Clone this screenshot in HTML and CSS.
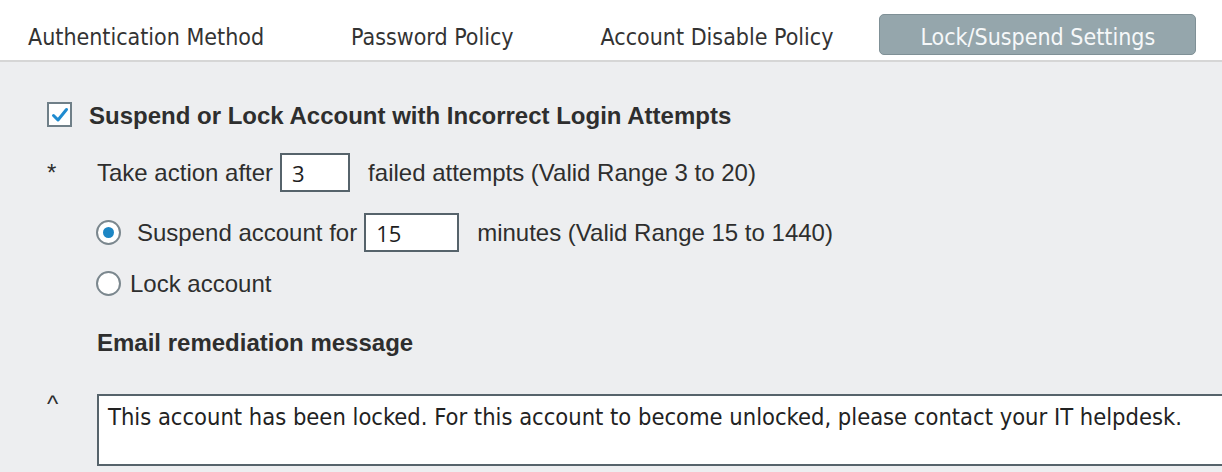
FILE: index.html
```html
<!DOCTYPE html>
<html lang="en">
<head>
  <meta charset="UTF-8">
  <title>Lock/Suspend Settings</title>
  <link rel="stylesheet" href="styles.css">
</head>
<body>
  <div class="tabs">
    <div class="tab">Authentication Method</div>
    <div class="tab">Password Policy</div>
    <div class="tab">Account Disable Policy</div>
    <div class="tab active">Lock/Suspend Settings</div>
  </div>

  <div class="panel">
    <div class="check-row">
      <span class="checkbox">
        <svg width="18" height="16" viewBox="0 0 18 16">
          <path d="M2.5 8.5 L7 13 L15.5 2.5" fill="none" stroke="#1f8bd0" stroke-width="3" stroke-linecap="round" stroke-linejoin="round"/>
        </svg>
      </span>
      <span class="title">Suspend or Lock Account with Incorrect Login Attempts</span>
    </div>

    <div class="row attempts">
      <span class="marker">*</span>
      <span>Take action after</span>
      <input class="num short" type="text" value="3">
      <span>failed attempts (Valid Range 3 to 20)</span>
    </div>

    <div class="row option">
      <span class="marker"></span>
      <span class="radio checked"></span>
      <span class="radio-label wide">Suspend account for</span>
      <input class="num" type="text" value="15">
      <span>minutes (Valid Range 15 to 1440)</span>
    </div>

    <div class="row option">
      <span class="marker"></span>
      <span class="radio"></span>
      <span class="radio-label">Lock account</span>
    </div>

    <div class="row heading">
      <span class="marker"></span>
      <span class="subtitle">Email remediation message</span>
    </div>

    <div class="row message">
      <span class="marker caret">^</span>
      <textarea class="msg" readonly>This account has been locked. For this account to become unlocked, please contact your IT helpdesk.</textarea>
    </div>
  </div>
</body>
</html>
```

FILE: styles.css
```css
body {
  margin: 0;
  overflow: hidden;
  background: #edeef0;
  font-family: "Liberation Sans", Arial, sans-serif;
  font-size: 24px;
  color: #2e2e2e;
}

/* Tab bar */
.tabs {
  display: flex;
  gap: 5px;
  height: 60px;
  background: white;
  border-bottom: 2px solid #d6d6d6;
  font-family: "DejaVu Sans Condensed", "DejaVu Sans", sans-serif;
  font-stretch: condensed;
  font-size: 23px;
}

.tab {
  height: 41px;
  box-sizing: border-box;
  margin-top: 14px;
  padding: 4px 40px 0;
  display: flex;
  align-items: center;
  color: #333;
  border: 1px solid transparent;
  border-radius: 5px;
}

.tab:first-child {
  padding-left: 27px;
  border-radius: 0 5px 5px 0;
}

.tab.active {
  background: #95a6ac;
  border-color: #7f9096;
  color: #f6f8f9;
}

/* Content */
.panel {
  padding: 39px 0 0 47px;
}

.check-row {
  display: flex;
  align-items: center;
  height: 25px;
}

.checkbox {
  width: 21px;
  height: 21px;
  border: 2px solid #6f7f88;
  background: white;
  display: flex;
  align-items: center;
  justify-content: center;
  margin-right: 17px;
  margin-top: 2px;
}

.title,
.subtitle {
  font-weight: bold;
}

.title {
  margin-top: 5px;
}

.row {
  display: flex;
  align-items: center;
}

.marker {
  width: 50px;
  flex: none;
}

.attempts {
  margin-top: 27px;
  height: 39px;
}

.option {
  height: 39px;
  margin-top: 21px;
}

.option + .option {
  margin-top: 19px;
  height: 25px;
}

.heading {
  margin-top: 33px;
}

.message {
  margin-top: 37px;
  align-items: flex-start;
}

.caret {
  margin-top: -4px;
}

.num {
  height: 35px;
  box-sizing: content-box;
  padding: 0 0 0 10px;
  margin: 0 18px 0 7px;
  border: 2px solid #56636b;
  background: white;
  font-family: "Open Sans", sans-serif;
  font-size: 22px;
  color: #1e1e1e;
  outline: none;
}

.num.short {
  width: 56px;
}

.num:not(.short) {
  width: 81px;
}

.radio {
  width: 21px;
  height: 21px;
  border: 2px solid #7b878e;
  border-radius: 50%;
  background: white;
  display: flex;
  align-items: center;
  justify-content: center;
  margin-left: -1px;
  margin-right: 9px;
  flex: none;
}

.radio.checked::after {
  content: "";
  width: 11px;
  height: 11px;
  border-radius: 50%;
  background: #1d86c4;
}

.radio-label.wide {
  padding-left: 7px;
}

/* runs off the right edge of the view, so no right border */
.msg {
  flex: 1;
  height: 72px;
  margin: 0;
  padding: 7px 9px;
  box-sizing: border-box;
  border: 2px solid #56636b;
  border-right: none;
  background: white;
  resize: none;
  outline: none;
  font-family: "DejaVu Sans Condensed", "DejaVu Sans", sans-serif;
  font-stretch: condensed;
  font-size: 23.5px;
  color: #222;
  overflow: hidden;
  white-space: nowrap;
}
```
